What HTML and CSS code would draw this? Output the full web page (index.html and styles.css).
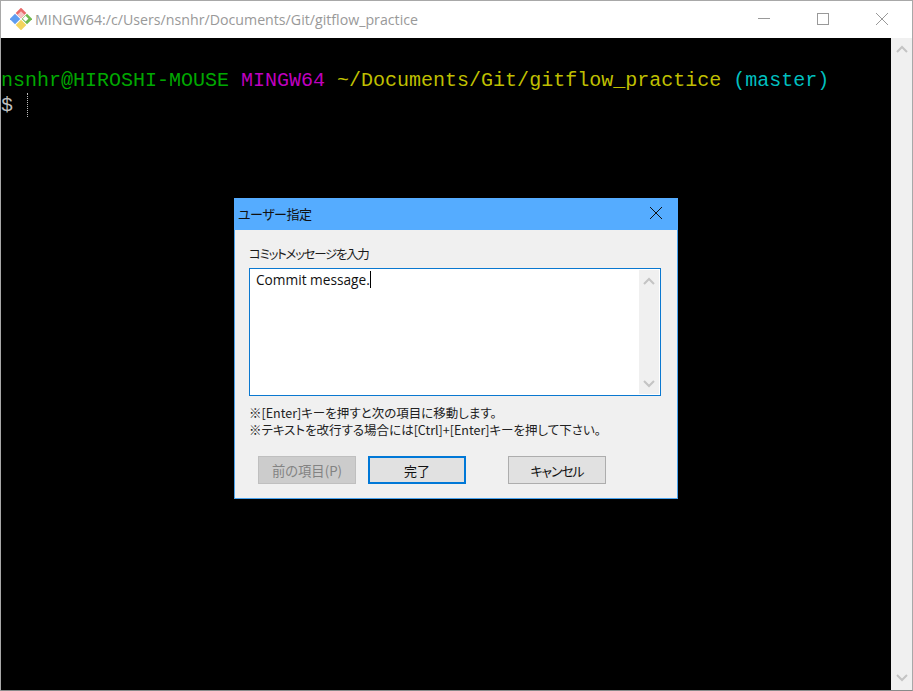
FILE: index.html
```html
<!DOCTYPE html>
<html lang="ja">
<head>
<meta charset="utf-8">
<title>MINGW64</title>
<link rel="stylesheet" href="styles.css">
</head>
<body>
<div class="window">
  <header class="titlebar">
    <svg class="app-icon" width="22" height="22" viewBox="0 0 22 22">
      <g transform="rotate(45 11 11)">
        <rect x="3" y="3" width="7.5" height="7.5" fill="#e96a6a"/>
        <rect x="11.5" y="3" width="7.5" height="7.5" fill="#6fb84e"/>
        <rect x="3" y="11.5" width="7.5" height="7.5" fill="#5f9cf0"/>
        <rect x="11.5" y="11.5" width="7.5" height="7.5" fill="#f3d45c"/>
        <rect x="5.5" y="5.5" width="5" height="5" fill="#f4c4c4"/>
        <rect x="12" y="5.5" width="4" height="4" fill="#fff"/>
      </g>
    </svg>
    <span class="title-text">MINGW64:/c/Users/nsnhr/Documents/Git/gitflow_practice</span>
    <div class="win-controls">
      <svg class="win-btn" width="14" height="14" viewBox="0 0 14 14"><path d="M1 6.5H13" stroke="#999" fill="none"/></svg>
      <svg class="win-btn" width="14" height="14" viewBox="0 0 14 14"><rect x="1.5" y="1.5" width="11" height="11" stroke="#999" fill="none"/></svg>
      <svg class="win-btn" width="14" height="14" viewBox="0 0 14 14"><path d="M1 1L13 13M13 1L1 13" stroke="#999" fill="none"/></svg>
    </div>
  </header>
  <main class="client">
    <div class="terminal">
      <div class="line"><span class="green">nsnhr@HIROSHI-MOUSE</span> <span class="magenta">MINGW64</span> <span class="yellow">~/Documents/Git/gitflow_practice</span> <span class="cyan">(master)</span></div>
      <div class="line prompt"><span>$</span><span class="cursor"></span></div>
    </div>
    <div class="scrollbar">
      <svg width="12" height="8" viewBox="0 0 12 8"><path d="M1 7L6 2L11 7" stroke="#c4c4c4" stroke-width="2" fill="none"/></svg>
      <svg width="12" height="8" viewBox="0 0 12 8"><path d="M1 1L6 6L11 1" stroke="#c4c4c4" stroke-width="2" fill="none"/></svg>
    </div>
  </main>
</div>

<section class="dialog">
  <header class="dialog-title">
    <span>ユーザー指定</span>
    <svg width="14" height="14" viewBox="0 0 14 14"><path d="M1 1L13 13M13 1L1 13" stroke="#111" fill="none"/></svg>
  </header>
  <div class="dialog-body">
    <label class="prompt-label">コミットメッセージを入力</label>
    <div class="textbox">
      <div class="textbox-text">Commit message.<span class="caret"></span></div>
      <div class="textbox-scroll">
        <svg width="12" height="8" viewBox="0 0 12 8"><path d="M1 7L6 2L11 7" stroke="#c4c4c4" stroke-width="2" fill="none"/></svg>
        <svg width="12" height="8" viewBox="0 0 12 8"><path d="M1 1L6 6L11 1" stroke="#c4c4c4" stroke-width="2" fill="none"/></svg>
      </div>
    </div>
    <p class="hint">※[Enter]キーを押すと次の項目に移動します。<br>※テキストを改行する場合には[Ctrl]+[Enter]キーを押して下さい。</p>
    <div class="buttons">
      <button class="btn disabled">前の項目(P)</button>
      <button class="btn primary">完了</button>
      <button class="btn cancel">キャンセル</button>
    </div>
  </div>
</section>
</body>
</html>
```
FILE: styles.css
```css
* { box-sizing: border-box; }
html, body { margin: 0; padding: 0; height: 100%; overflow: hidden; background: #000; }
body { position: relative; width: 913px; height: 691px; }

.window {
  width: 913px; height: 691px;
  display: flex; flex-direction: column;
  border: 1px solid #a8a8a8;
  border-bottom-color: #8a8a8a;
}
.titlebar {
  height: 37px; flex: none;
  display: flex; align-items: center;
  background: #fff;
  padding-left: 9px;
}
.app-icon { flex: none; margin-top: -1px; }
.title-text {
  margin-left: 3px;
  font: 14.2px "Open Sans", "Liberation Sans", sans-serif;
  color: #999;
  white-space: nowrap;
}
.win-controls { margin-left: auto; display: flex; gap: 45px; padding-right: 23px; margin-top: -1px; }
.win-btn { display: block; }

.client { flex: 1; display: flex; min-height: 0; }
.terminal {
  flex: 1; background: #000; padding-top: 30px;
  font: 20px/25px "Liberation Mono", monospace;
  color: #bfbfbf;
}
.line { height: 25px; white-space: pre; }
.green { color: #00a800; }
.magenta { color: #bf00bf; }
.yellow { color: #bfbf00; }
.cyan { color: #00bfbf; }
.prompt { display: flex; }
.cursor {
  width: 0; height: 24px; margin-left: 14px;
  border-left: 1px dotted #bbb;
}
.scrollbar {
  width: 21px; flex: none;
  background: #f0f0f0;
  display: flex; flex-direction: column; justify-content: space-between; align-items: center;
  padding: 7px 0 8px;
}

.dialog {
  position: absolute; left: 234px; top: 198px;
  width: 444px; height: 301px;
  background: #f0f0f0;
  border: 1px solid #4aa3ee;
  border-top: 0;
  display: flex; flex-direction: column;
  font-family: "Noto Sans CJK JP", sans-serif;
  font-feature-settings: "palt";
  color: #1a1a1a;
}
.dialog-title {
  height: 32px; flex: none;
  background: #55acff;
  margin: 0 -1px;
  display: flex; align-items: center; justify-content: space-between;
  padding: 0 15px 2px 4px;
  font-size: 13px;
  letter-spacing: -0.5px;
  color: #111;
}
.dialog-body { flex: 1; padding: 15px 16px 0 14px; display: flex; flex-direction: column; }
.prompt-label { font-size: 12.5px; letter-spacing: -1.3px; line-height: 18px; height: 18px; }
.textbox {
  margin-top: 5px;
  height: 128px;
  background: #fff;
  border: 1px solid #0a78d0;
  display: flex;
}
.textbox-text {
  flex: 1;
  padding: 2px 6px;
  font: 13.7px/18px "Open Sans", "Noto Sans", sans-serif;
  color: #111;
}
.caret { display: inline-block; width: 1px; height: 17px; background: #000; vertical-align: top; }
.textbox-scroll {
  width: 20px; flex: none; margin: 1px;
  background: #f0f0f0;
  display: flex; flex-direction: column; justify-content: space-between; align-items: center;
  padding: 7px 0 6px;
}
.hint { margin: 8px 0 0; font-size: 12.5px; line-height: 17px; color: #222; }
.buttons { display: flex; margin-top: 18px; padding-left: 9px; }
.btn {
  width: 98px; height: 28px; padding: 0;
  background: #e1e1e1;
  border: 1px solid #adadad;
  font: 13px "Noto Sans CJK JP", sans-serif;
  font-feature-settings: "palt";
  color: #111;
}
.btn.disabled { background: #cccccc; border-color: #bfbfbf; color: #838383; font-size: 13.3px; }
.btn.primary { margin-left: 12px; border: 2px solid #0078d7; }
.btn.cancel { margin-left: 42px; letter-spacing: -1.2px; }
```
